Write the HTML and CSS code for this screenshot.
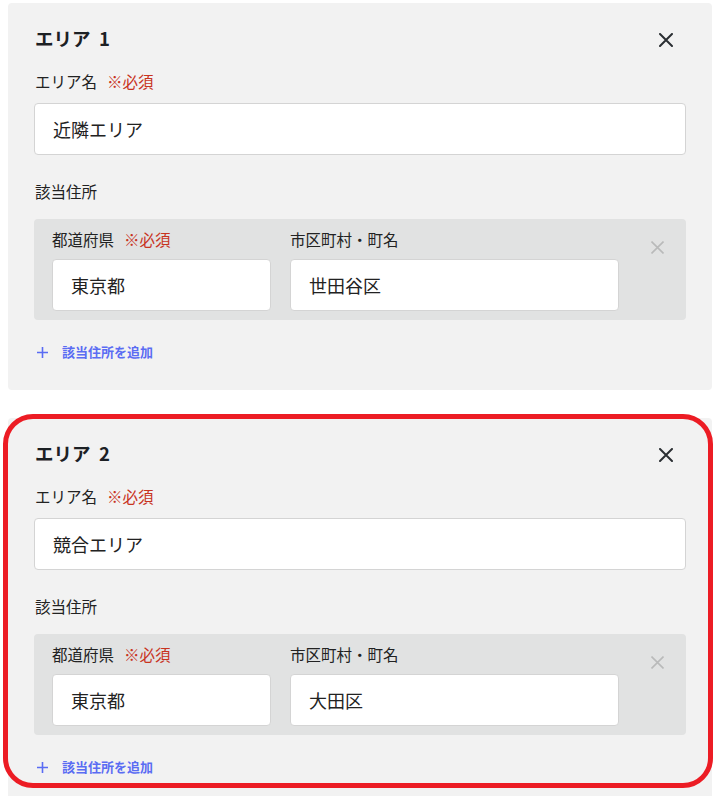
FILE: index.html
```html
<!DOCTYPE html>
<html lang="ja">
<head>
  <meta charset="UTF-8">
  <meta name="viewport" content="width=device-width, initial-scale=1.0">
  <title>エリア設定</title>
  <link rel="stylesheet" href="styles.css">
</head>
<body>
  <div class="area-list">

    <section class="area-card">
      <div class="area-head">
        <h2 class="area-title">エリア&nbsp; 1</h2>
        <button class="close-btn" aria-label="削除">
          <svg width="14" height="14" viewBox="0 0 14 14"><path d="M1 1L13 13M13 1L1 13" stroke="#2b2f33" stroke-width="2" stroke-linecap="round"/></svg>
        </button>
      </div>
      <label class="field-label">エリア名<span class="required">※必須</span></label>
      <input class="text-input wide" type="text" value="近隣エリア">

      <div class="section-label">該当住所</div>
      <div class="address-box">
        <div class="address-field pref">
          <label class="field-label">都道府県<span class="required">※必須</span></label>
          <input class="text-input" type="text" value="東京都">
        </div>
        <div class="address-field city">
          <label class="field-label">市区町村・町名</label>
          <input class="text-input" type="text" value="世田谷区">
        </div>
        <button class="remove-btn" aria-label="住所を削除">
          <svg width="13" height="13" viewBox="0 0 13 13"><path d="M0.5 0.5L12.5 12.5M12.5 0.5L0.5 12.5" stroke="#b9baba" stroke-width="1.6"/></svg>
        </button>
      </div>

      <a class="add-link" href="#">
        <svg width="11" height="11" viewBox="0 0 11 11"><path d="M5.5 0V11M0 5.5H11" stroke="#5a6cf3" stroke-width="1.6"/></svg>
        該当住所を追加
      </a>
    </section>

    <section class="area-card highlighted">
      <div class="area-head">
        <h2 class="area-title">エリア&nbsp; 2</h2>
        <button class="close-btn" aria-label="削除">
          <svg width="14" height="14" viewBox="0 0 14 14"><path d="M1 1L13 13M13 1L1 13" stroke="#2b2f33" stroke-width="2" stroke-linecap="round"/></svg>
        </button>
      </div>
      <label class="field-label">エリア名<span class="required">※必須</span></label>
      <input class="text-input wide" type="text" value="競合エリア">

      <div class="section-label">該当住所</div>
      <div class="address-box">
        <div class="address-field pref">
          <label class="field-label">都道府県<span class="required">※必須</span></label>
          <input class="text-input" type="text" value="東京都">
        </div>
        <div class="address-field city">
          <label class="field-label">市区町村・町名</label>
          <input class="text-input" type="text" value="大田区">
        </div>
        <button class="remove-btn" aria-label="住所を削除">
          <svg width="13" height="13" viewBox="0 0 13 13"><path d="M0.5 0.5L12.5 12.5M12.5 0.5L0.5 12.5" stroke="#b9baba" stroke-width="1.6"/></svg>
        </button>
      </div>

      <a class="add-link" href="#">
        <svg width="11" height="11" viewBox="0 0 11 11"><path d="M5.5 0V11M0 5.5H11" stroke="#5a6cf3" stroke-width="1.6"/></svg>
        該当住所を追加
      </a>
    </section>

  </div>
</body>
</html>
```

FILE: styles.css
```css
body {
  margin: 0;
  padding: 3px 8px;
  background-color: #fff;
  color: #222;
  font-family: "Noto Sans CJK JP", "Noto Sans", sans-serif;
}

.area-list {
  display: flex;
  flex-direction: column;
  gap: 28px;
}

.area-card {
  position: relative;
  display: flex;
  flex-direction: column;
  align-items: flex-start;
  background-color: #f2f2f2;
  border-radius: 4px;
  padding: 23px 26px 28px 26px;
}

/* red annotation frame round the second card */
.area-card.highlighted::after {
  content: "";
  position: absolute;
  top: -4px;
  left: -5px;
  right: -1px;
  height: 374px;
  box-sizing: border-box;
  border: 5px solid #ec1c24;
  border-radius: 30px;
  pointer-events: none;
}

.area-head {
  display: flex;
  align-items: center;
  justify-content: space-between;
  align-self: stretch;
  height: 24px;
  padding-left: 1px;
}

.area-title {
  margin: 0;
  font-size: 18.5px;
  font-weight: bold;
  line-height: 24px;
  color: #1c2024;
}

.close-btn,
.remove-btn {
  display: flex;
  padding: 0;
  border: none;
  background: none;
  cursor: pointer;
}

.close-btn {
  margin: 4px 13px 0 0;
}

.field-label {
  display: block;
  margin-top: 21px;
  padding-left: 1px;
  font-size: 15.5px;
  line-height: 20px;
  color: #222;
}

.required {
  margin-left: 10px;
  color: #c8341f;
}

.text-input {
  box-sizing: border-box;
  height: 52px;
  margin-top: 12px;
  padding: 0 18px;
  border: 1px solid #d4d4d4;
  border-radius: 4px;
  background: #fff;
  font-family: inherit;
  font-size: 18px;
  color: #222;
}

.text-input.wide {
  align-self: stretch;
  width: auto;
}

.section-label {
  margin-top: 26px;
  padding-left: 1px;
  font-size: 15.5px;
  line-height: 20px;
}

.address-box {
  display: flex;
  align-self: stretch;
  gap: 19px;
  margin-top: 18px;
  padding: 10px 9px 9px 18px;
  background-color: #e1e2e2;
  border-radius: 4px;
}

.address-field {
  display: flex;
  flex-direction: column;
}

.address-field .field-label {
  margin-top: 0;
  padding-left: 0;
}

.address-field .text-input {
  margin-top: 10px;
  width: 100%;
}

.address-field.pref {
  width: 219px;
}

.address-field.city {
  width: 329px;
}

.remove-btn {
  margin: 12px 0 0 auto;
  width: 39px;
  justify-content: center;
  align-self: flex-start;
}

.add-link {
  display: flex;
  align-items: center;
  gap: 14px;
  margin: 22px 0 0 3px;
  line-height: 20px;
  font-size: 13px;
  font-weight: bold;
  color: #5a6cf3;
  text-decoration: none;
}
```
